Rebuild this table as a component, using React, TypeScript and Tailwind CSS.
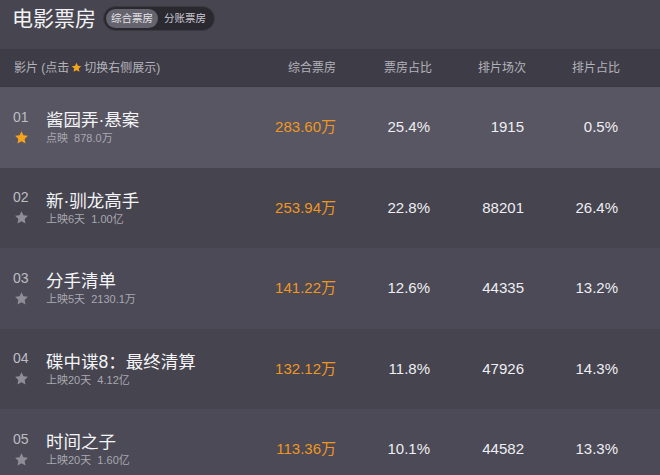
import React from 'react';

type Movie = {
  rank: string;
  name: string;
  sub: string;
  box: string;
  boxRate: string;
  shows: string;
  showRate: string;
  starred?: boolean;
};

const movies: Movie[] = [
  { rank: '01', name: '酱园弄·悬案', sub: '点映  878.0万', box: '283.60万', boxRate: '25.4%', shows: '1915', showRate: '0.5%', starred: true },
  { rank: '02', name: '新·驯龙高手', sub: '上映6天  1.00亿', box: '253.94万', boxRate: '22.8%', shows: '88201', showRate: '26.4%' },
  { rank: '03', name: '分手清单', sub: '上映5天  2130.1万', box: '141.22万', boxRate: '12.6%', shows: '44335', showRate: '13.2%' },
  { rank: '04', name: '碟中谍8：最终清算', sub: '上映20天  4.12亿', box: '132.12万', boxRate: '11.8%', shows: '47926', showRate: '14.3%' },
  { rank: '05', name: '时间之子', sub: '上映20天  1.60亿', box: '113.36万', boxRate: '10.1%', shows: '44582', showRate: '13.3%' },
];

const rowBg = ['bg-[#575662]', 'bg-[#45444f]', 'bg-[#4b4a56]', 'bg-[#45444f]', 'bg-[#4b4a56]'];

function Star({ active, size = 14 }: { active?: boolean; size?: number }) {
  return (
    <svg width={size} height={size} viewBox="0 0 24 24" className="block">
      <path
        d="M12 1.8l3.1 6.6 7.2.9-5.3 5 1.4 7.1L12 17.9l-6.4 3.5 1.4-7.1-5.3-5 7.2-.9z"
        fill={active ? '#f5a21c' : '#8f8e98'}
      />
    </svg>
  );
}

export default function App() {
  return (
    <div
      className="w-[660px] h-[475px] overflow-hidden bg-[#474650] text-white"
      style={{ fontFamily: '"Liberation Sans", "Noto Sans CJK SC", sans-serif' }}
    >
      <div className="h-[49px] flex items-center pl-[12px] gap-[7px] pb-[12px]">
        <h1 className="text-[21px] leading-none text-[#f2f2f4]">电影票房</h1>
        <div className="flex items-center h-[25px] rounded-full bg-[#2a2930] p-[2px] border border-[#3a3941]">
          <span className="h-full flex items-center px-[5px] rounded-full bg-[#65646e] text-[10.5px] text-[#e4e3ea]">
            综合票房
          </span>
          <span className="h-full flex items-center px-[6px] text-[10.5px] text-[#c9c8d0]">分账票房</span>
        </div>
      </div>

      <div className="h-[38px] bg-[#3e3d47] border-b border-[#393842] grid grid-cols-[1fr_94px_94px_94px_94px] pr-[40px] items-center text-[12px] text-[#b3b2bb]">
        <div className="pl-[14px] flex items-center">
          影片 (点击
          <span className="mx-[2px]">
            <Star active size={11} />
          </span>
          切换右侧展示)
        </div>
        <div className="text-right pr-[2px]">综合票房</div>
        <div className="text-right">票房占比</div>
        <div className="text-right">排片场次</div>
        <div className="text-right">排片占比</div>
      </div>

      {movies.map((m, i) => (
        <div
          key={m.rank}
          className={`h-[80.5px] grid grid-cols-[1fr_94px_94px_94px_94px] pr-[42px] items-center ${rowBg[i]}`}
        >
          <div className="flex items-center pl-[13px]">
            <div className="w-[33px] flex flex-col gap-[6px]">
              <span className="text-[14px] leading-none text-[#bdbcc5]">{m.rank}</span>
              <span className="pl-[1px]">
                <Star active={m.starred} size={15} />
              </span>
            </div>
            <div className="flex flex-col">
              <span className="text-[17.5px] leading-[22px] text-[#f4f4f6]">{m.name}</span>
              <span className="text-[11px] leading-[14px] text-[#a9a8b1] whitespace-pre">{m.sub}</span>
            </div>
          </div>
          <div className="text-right text-[15px] text-[#f0961f]">{m.box}</div>
          <div className="text-right text-[15px] text-[#eeeef2]">{m.boxRate}</div>
          <div className="text-right text-[15px] text-[#eeeef2]">{m.shows}</div>
          <div className="text-right text-[15px] text-[#eeeef2]">{m.showRate}</div>
        </div>
      ))}
    </div>
  );
}
